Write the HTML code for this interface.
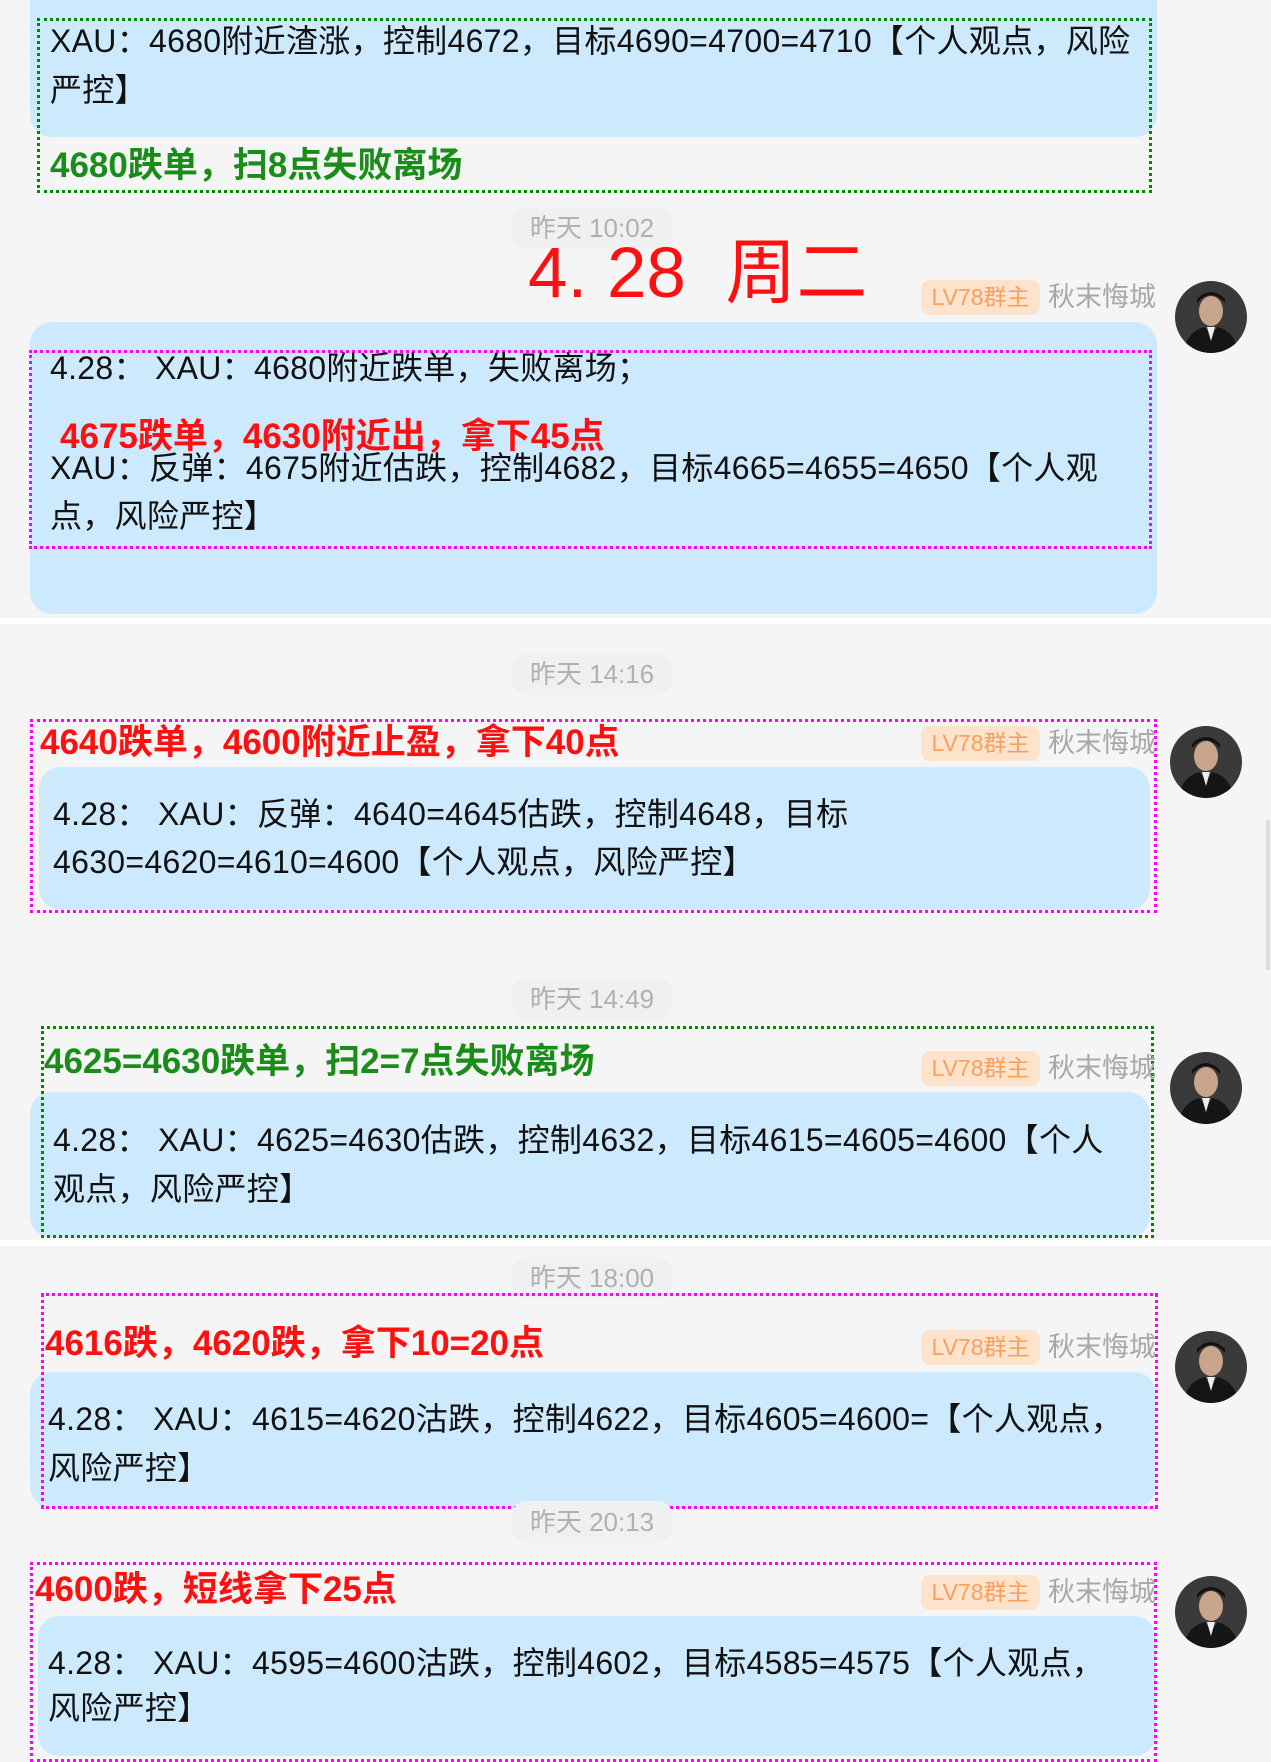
<!DOCTYPE html>
<html><head><meta charset="utf-8">
<style>
html,body{margin:0;padding:0;}
body{width:1271px;height:1720px;background:#f5f5f5;position:relative;overflow:hidden;font-family:"Liberation Sans","Noto Sans CJK SC",sans-serif;}
.a{position:absolute;}
.bub{position:absolute;background:#cce9fd;border-radius:22px;}
.box{position:absolute;box-sizing:border-box;}
.g{border:3px dotted #008800;}
.m{border:3px dotted #ff00ff;}
.t{position:absolute;font-size:32px;letter-spacing:0.3px;color:#111;white-space:nowrap;line-height:49px;}
.ts{position:absolute;left:512px;width:160px;height:42px;border-radius:14px;background:#f0f0f0;color:#b0b0b0;font-size:26px;text-align:center;line-height:42px;}
.red{color:#ff1010;font-weight:bold;font-size:35px;letter-spacing:0;}
.grn{color:#1a8c1a;font-weight:bold;font-size:35px;letter-spacing:0;}
.badge{position:absolute;left:921px;width:119px;height:35px;border-radius:9px;background:#fde2cc;color:#f8a05c;font-size:23px;text-align:center;line-height:35px;}
.name{position:absolute;left:1048px;font-size:27px;color:#a8a8a8;line-height:35px;}
.av{position:absolute;left:1175px;width:72px;height:72px;}
.sep{position:absolute;left:0;width:1271px;height:6px;background:#fff;}
</style></head><body>

<!-- block 1 -->
<div class="bub" style="left:30px;top:-20px;width:1127px;height:157px;"></div>
<div class="box g" style="left:37px;top:18px;width:1115px;height:175px;"></div>
<div class="t" style="left:50px;top:17px;">XAU：4680附近渣涨，控制4672，目标4690=4700=4710【个人观点，风险</div>
<div class="t" style="left:50px;top:66px;">严控】</div>
<div class="t grn" style="left:50px;top:141px;">4680跌单，扫8点失败离场</div>

<div class="ts" style="top:207px;">昨天 10:02</div>
<div class="a" style="left:528px;top:234px;font-size:71px;color:#ff1010;line-height:80px;white-space:nowrap;">4. 28&nbsp; 周二</div>
<div class="badge" style="top:280px;">LV78群主</div>
<div class="name" style="top:280px;">秋末悔城</div>
<svg class="av" style="top:281px" viewBox="0 0 72 72"><defs><clipPath id="c1"><circle cx="36" cy="36" r="36"/></clipPath></defs><g clip-path="url(#c1)"><rect width="72" height="72" fill="#3a3a3a"/><ellipse cx="36" cy="30" rx="12" ry="15" fill="#c9a58c"/><path d="M22 22 Q36 6 50 22 L50 18 Q36 4 22 18Z" fill="#111"/><path d="M8 72 Q12 50 30 46 L36 56 L42 46 Q60 50 64 72Z" fill="#151515"/><path d="M32 46 L36 60 L40 46Z" fill="#eee"/></g></svg>

<div class="bub" style="left:30px;top:322px;width:1127px;height:292px;"></div>
<div class="box m" style="left:29px;top:350px;width:1123px;height:199px;"></div>
<div class="t" style="left:50px;top:344px;">4.28：&nbsp;XAU：4680附近跌单，失败离场；</div>
<div class="t red" style="left:60px;top:412px;">4675跌单，4630附近出，拿下45点</div>
<div class="t" style="left:50px;top:444px;">XAU：反弹：4675附近估跌，控制4682，目标4665=4655=4650【个人观</div>
<div class="t" style="left:50px;top:492px;">点，风险严控】</div>

<div class="sep" style="top:618px;"></div>

<!-- block 2 -->
<div class="ts" style="top:653px;">昨天 14:16</div>
<div class="bub" style="left:39px;top:767px;width:1111px;height:143px;"></div>
<div class="box m" style="left:30px;top:719px;width:1127px;height:194px;"></div>
<div class="t red" style="left:40px;top:718px;">4640跌单，4600附近止盈，拿下40点</div>
<div class="badge" style="top:726px;">LV78群主</div>
<div class="name" style="top:726px;">秋末悔城</div>
<svg class="av" style="top:726px;left:1170px" viewBox="0 0 72 72"><defs><clipPath id="c2"><circle cx="36" cy="36" r="36"/></clipPath></defs><g clip-path="url(#c2)"><rect width="72" height="72" fill="#3a3a3a"/><ellipse cx="36" cy="30" rx="12" ry="15" fill="#c9a58c"/><path d="M22 22 Q36 6 50 22 L50 18 Q36 4 22 18Z" fill="#111"/><path d="M8 72 Q12 50 30 46 L36 56 L42 46 Q60 50 64 72Z" fill="#151515"/><path d="M32 46 L36 60 L40 46Z" fill="#eee"/></g></svg>
<div class="t" style="left:53px;top:790px;">4.28：&nbsp;XAU：反弹：4640=4645估跌，控制4648，目标</div>
<div class="t" style="left:53px;top:838px;">4630=4620=4610=4600【个人观点，风险严控】</div>

<div class="a" style="left:1266px;top:820px;width:4px;height:150px;background:#ddd;"></div>

<!-- block 3 -->
<div class="ts" style="top:978px;">昨天 14:49</div>
<div class="bub" style="left:30px;top:1092px;width:1120px;height:146px;"></div>
<div class="box g" style="left:41px;top:1026px;width:1113px;height:212px;"></div>
<div class="t grn" style="left:44px;top:1037px;">4625=4630跌单，扫2=7点失败离场</div>
<div class="badge" style="top:1051px;">LV78群主</div>
<div class="name" style="top:1051px;">秋末悔城</div>
<svg class="av" style="top:1052px;left:1170px" viewBox="0 0 72 72"><defs><clipPath id="c3"><circle cx="36" cy="36" r="36"/></clipPath></defs><g clip-path="url(#c3)"><rect width="72" height="72" fill="#3a3a3a"/><ellipse cx="36" cy="30" rx="12" ry="15" fill="#c9a58c"/><path d="M22 22 Q36 6 50 22 L50 18 Q36 4 22 18Z" fill="#111"/><path d="M8 72 Q12 50 30 46 L36 56 L42 46 Q60 50 64 72Z" fill="#151515"/><path d="M32 46 L36 60 L40 46Z" fill="#eee"/></g></svg>
<div class="t" style="left:53px;top:1116px;">4.28：&nbsp;XAU：4625=4630估跌，控制4632，目标4615=4605=4600【个人</div>
<div class="t" style="left:53px;top:1165px;">观点，风险严控】</div>

<div class="sep" style="top:1240px;"></div>

<!-- block 4 -->
<div class="ts" style="top:1257px;">昨天 18:00</div>
<div class="bub" style="left:30px;top:1372px;width:1126px;height:136px;"></div>
<div class="box m" style="left:41px;top:1293px;width:1117px;height:216px;"></div>
<div class="t red" style="left:45px;top:1319px;">4616跌，4620跌，拿下10=20点</div>
<div class="badge" style="top:1330px;">LV78群主</div>
<div class="name" style="top:1330px;">秋末悔城</div>
<svg class="av" style="top:1331px" viewBox="0 0 72 72"><defs><clipPath id="c4"><circle cx="36" cy="36" r="36"/></clipPath></defs><g clip-path="url(#c4)"><rect width="72" height="72" fill="#3a3a3a"/><ellipse cx="36" cy="30" rx="12" ry="15" fill="#c9a58c"/><path d="M22 22 Q36 6 50 22 L50 18 Q36 4 22 18Z" fill="#111"/><path d="M8 72 Q12 50 30 46 L36 56 L42 46 Q60 50 64 72Z" fill="#151515"/><path d="M32 46 L36 60 L40 46Z" fill="#eee"/></g></svg>
<div class="t" style="left:48px;top:1395px;">4.28：&nbsp;XAU：4615=4620沽跌，控制4622，目标4605=4600=【个人观点，</div>
<div class="t" style="left:48px;top:1444px;">风险严控】</div>

<!-- block 5 -->
<div class="ts" style="top:1501px;">昨天 20:13</div>
<div class="bub" style="left:38px;top:1616px;width:1118px;height:140px;"></div>
<div class="box m" style="left:30px;top:1562px;width:1127px;height:200px;"></div>
<div class="t red" style="left:35px;top:1565px;">4600跌，短线拿下25点</div>
<div class="badge" style="top:1575px;">LV78群主</div>
<div class="name" style="top:1575px;">秋末悔城</div>
<svg class="av" style="top:1576px" viewBox="0 0 72 72"><defs><clipPath id="c5"><circle cx="36" cy="36" r="36"/></clipPath></defs><g clip-path="url(#c5)"><rect width="72" height="72" fill="#3a3a3a"/><ellipse cx="36" cy="30" rx="12" ry="15" fill="#c9a58c"/><path d="M22 22 Q36 6 50 22 L50 18 Q36 4 22 18Z" fill="#111"/><path d="M8 72 Q12 50 30 46 L36 56 L42 46 Q60 50 64 72Z" fill="#151515"/><path d="M32 46 L36 60 L40 46Z" fill="#eee"/></g></svg>
<div class="t" style="left:48px;top:1639px;">4.28：&nbsp;XAU：4595=4600沽跌，控制4602，目标4585=4575【个人观点，</div>
<div class="t" style="left:48px;top:1684px;">风险严控】</div>

</body></html>
